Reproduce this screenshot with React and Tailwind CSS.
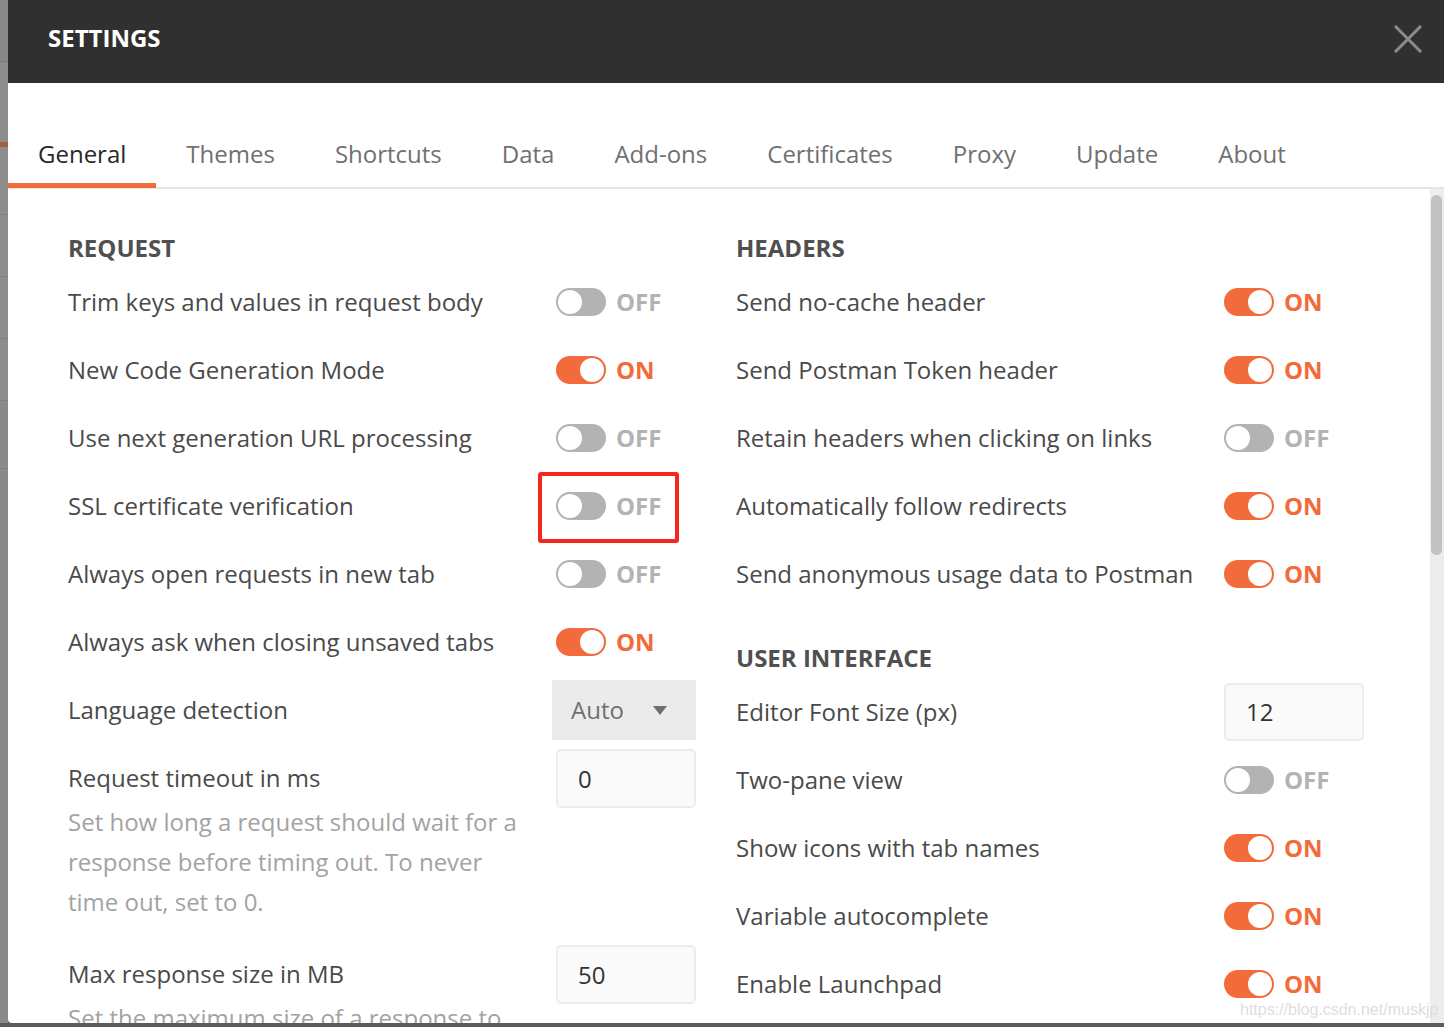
import React from "react";

function Toggle({ on }) {
  return (
    <div className="flex items-center gap-[10px]">
      <div
        className={
          "w-[50px] h-[28px] rounded-full p-[2px] flex " +
          (on ? "bg-[#f26b3a] justify-end" : "bg-[#b3b3b3] justify-start")
        }
      >
        <div className="w-[24px] h-[24px] rounded-full bg-white" />
      </div>
      <span
        className={
          "font-bold text-[24px] leading-[28px] " +
          (on ? "text-[#f26b3a]" : "text-[#b3b3b3]")
        }
      >
        {on ? "ON" : "OFF"}
      </span>
    </div>
  );
}

function Row({ label, children }) {
  return (
    <div className="h-[68px] shrink-0 flex items-center">
      <div className="flex-1 text-[24px] leading-[40px] text-[#4a4a4a]">{label}</div>
      <div className="w-[140px] flex items-center">{children}</div>
    </div>
  );
}

function Heading({ children, className = "" }) {
  return (
    <div
      className={
        "h-[40px] shrink-0 flex items-center font-bold text-[24px] text-[#505050] " + className
      }
    >
      {children}
    </div>
  );
}

function NumInput({ value, h = "h-[59px]" }) {
  return (
    <div
      className={
        "w-[140px] " +
        h +
        " border-2 border-[#ececec] rounded-[5px] bg-[#fafafa] flex items-center pl-[20px] text-[24px] text-[#333333]"
      }
    >
      {value}
    </div>
  );
}

const tabs = [
  "General",
  "Themes",
  "Shortcuts",
  "Data",
  "Add-ons",
  "Certificates",
  "Proxy",
  "Update",
  "About",
];

export default function App() {
  return (
    <div
      className="w-[1444px] h-[1027px] bg-[#5c5c5c] relative overflow-hidden"
      style={{ fontFamily: '"Open Sans", "Noto Sans", sans-serif' }}
    >
      <div className="h-[1023px] flex">
        {/* background app strip */}
        <div className="w-[8px] h-full bg-[#8d8d8d] flex flex-col">
          <div className="h-[62px] shrink-0 bg-[#888888] border-b border-[#7a7a7a]" />
          <div className="h-[80px] shrink-0" />
          <div className="h-[5px] shrink-0 bg-[#a5603f]" />
          <div className="h-[68px] shrink-0 border-b border-[#808080]" />
          <div className="h-[62px] shrink-0 border-b border-[#808080]" />
          <div className="h-[62px] shrink-0 border-b border-[#808080]" />
          <div className="h-[62px] shrink-0 border-b border-[#808080]" />
          <div className="h-[68px] shrink-0 border-b border-[#808080] bg-[#8a8a8a]" />
          <div className="flex-1 bg-[#8a8a8a]" />
        </div>

        {/* dialog */}
        <div className="flex-1 h-full bg-white rounded-bl-[4px] flex flex-col overflow-hidden">
          {/* header */}
          <div className="h-[83px] shrink-0 bg-[#303030] flex items-center justify-between pl-[40px] pr-[22px]">
            <span className="text-white font-bold text-[24px] mt-[-8px]">SETTINGS</span>
            <svg width="28" height="28" viewBox="0 0 28 28" className="mt-[-6px]">
              <path
                d="M2 2 L26 26 M26 2 L2 26"
                stroke="#8c8c8c"
                strokeWidth="3"
                strokeLinecap="square"
              />
            </svg>
          </div>

          {/* tabs */}
          <div className="h-[106px] shrink-0 border-b-2 border-[#e6e6e6] flex items-end">
            {tabs.map((t, i) => (
              <div
                key={t}
                className={
                  "px-[30px] pb-[13px] border-b-[5px] text-[24px] leading-[32px] mb-[-1px] " +
                  (i === 0
                    ? "border-[#f26b3a] text-[#282828]"
                    : "border-transparent text-[#707070]")
                }
              >
                {t}
              </div>
            ))}
          </div>

          {/* body */}
          <div className="flex-1 flex overflow-hidden">
            <div className="flex-1 flex gap-[40px] pl-[60px] pt-[39px] overflow-hidden">
              {/* left column */}
              <div className="w-[628px] shrink-0 flex flex-col">
                <Heading>REQUEST</Heading>
                <Row label="Trim keys and values in request body">
                  <Toggle on={false} />
                </Row>
                <Row label="New Code Generation Mode">
                  <Toggle on={true} />
                </Row>
                <Row label="Use next generation URL processing">
                  <Toggle on={false} />
                </Row>
                <Row label="SSL certificate verification">
                  <Toggle on={false} />
                </Row>
                <Row label="Always open requests in new tab">
                  <Toggle on={false} />
                </Row>
                <Row label="Always ask when closing unsaved tabs">
                  <Toggle on={true} />
                </Row>
                <Row label="Language detection">
                  <div className="ml-[-4px] w-[144px] h-[60px] bg-[#ebebeb] flex items-center pl-[19px] text-[24px] text-[#707070]">
                    <span>Auto</span>
                    <svg width="14" height="9" viewBox="0 0 14 9" className="ml-[29px]">
                      <path d="M0 0 L14 0 L7 9 Z" fill="#6e6e6e" />
                    </svg>
                  </div>
                </Row>

                {/* request timeout */}
                <div className="mt-[5px] shrink-0 flex items-start">
                  <div className="flex-1 pt-[9px]">
                    <div className="text-[24px] leading-[40px] text-[#4a4a4a]">
                      Request timeout in ms
                    </div>
                    <div className="mt-[4px] text-[24px] leading-[40px] text-[#a3a3a3] w-[470px]">
                      Set how long a request should wait for a response before timing out. To never
                      time out, set to 0.
                    </div>
                  </div>
                  <div className="w-[140px]">
                    <NumInput value="0" />
                  </div>
                </div>

                {/* max response size */}
                <div className="mt-[23px] shrink-0 flex items-start">
                  <div className="flex-1 pt-[9px]">
                    <div className="text-[24px] leading-[40px] text-[#4a4a4a]">
                      Max response size in MB
                    </div>
                    <div className="mt-[4px] text-[24px] leading-[40px] text-[#a3a3a3] w-[470px]">
                      Set the maximum size of a response to download. To download a response of any
                      size, set to 0.
                    </div>
                  </div>
                  <div className="w-[140px]">
                    <NumInput value="50" />
                  </div>
                </div>
              </div>

              {/* right column */}
              <div className="w-[628px] shrink-0 flex flex-col">
                <Heading>HEADERS</Heading>
                <Row label="Send no-cache header">
                  <Toggle on={true} />
                </Row>
                <Row label="Send Postman Token header">
                  <Toggle on={true} />
                </Row>
                <Row label="Retain headers when clicking on links">
                  <Toggle on={false} />
                </Row>
                <Row label="Automatically follow redirects">
                  <Toggle on={true} />
                </Row>
                <Row label="Send anonymous usage data to Postman">
                  <Toggle on={true} />
                </Row>
                <Heading className="mt-[30px]">USER INTERFACE</Heading>
                <Row label="Editor Font Size (px)">
                  <NumInput value="12" h="h-[58px]" />
                </Row>
                <Row label="Two-pane view">
                  <Toggle on={false} />
                </Row>
                <Row label="Show icons with tab names">
                  <Toggle on={true} />
                </Row>
                <Row label="Variable autocomplete">
                  <Toggle on={true} />
                </Row>
                <Row label="Enable Launchpad">
                  <Toggle on={true} />
                </Row>
              </div>
            </div>

            {/* scrollbar */}
            <div className="w-[14px] shrink-0 bg-[#ededed] pt-[6px] pl-[1px]">
              <div className="w-[11px] h-[360px] rounded-full bg-[#c2c2c2]" />
            </div>
          </div>
        </div>
      </div>

      {/* red highlight box */}
      <div className="absolute left-[538px] top-[472px] w-[141px] h-[71px] border-[4px] border-[#f5261b] rounded-[3px]" />

      {/* watermark */}
      <div
        className="absolute left-[1240px] top-[998px] text-[16px] text-[#dedede]"
        style={{ fontFamily: '"Liberation Sans", Arial, sans-serif' }}
      >
        https://blog.csdn.net/muskjp
      </div>
    </div>
  );
}
